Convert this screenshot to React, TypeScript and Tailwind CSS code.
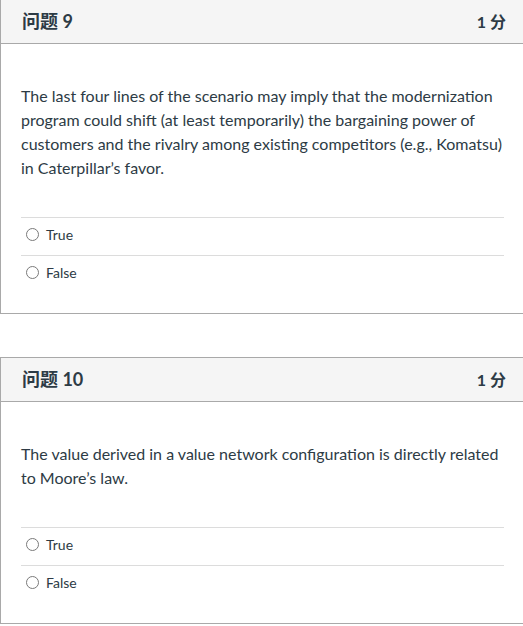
import React from 'react';

type Question = {
  num: number;
  text: string;
};

const questions: Question[] = [
  {
    num: 9,
    text: 'The last four lines of the scenario may imply that the modernization program could shift (at least temporarily) the bargaining power of customers and the rivalry among existing competitors (e.g., Komatsu) in Caterpillar’s favor.',
  },
  {
    num: 10,
    text: 'The value derived in a value network configuration is directly related to Moore’s law.',
  },
];

function Answer({ label }: { label: string }) {
  return (
    <div className="flex h-[38px] items-center border-t border-[#dcdcdc] pb-[4px] pl-[5px]">
      <span className="h-[13px] w-[13px] rounded-full border border-[#7a7a7a] bg-white" />
      <span className="ml-[7px] text-[14px] text-[#2d3b45]">{label}</span>
    </div>
  );
}

function QuestionCard({ q }: { q: Question }) {
  return (
    <div className="border border-[#a9a9a9] bg-white">
      <div className="flex h-[44px] items-center justify-between border-b border-[#a9a9a9] bg-[#f5f5f5] pl-[21px] pr-[18px]">
        <span className="text-[18px] font-bold text-[#2d3b45]">问题 {q.num}</span>
        <span className="text-[16px] font-bold text-[#2d3b45]">1 分</span>
      </div>
      <div className="px-[20px] pb-[20px] pt-[40px]">
        <p className="text-[16px] leading-[24px] text-[#2d3b45]">{q.text}</p>
        <div className="mt-[37px]">
          <Answer label="True" />
          <Answer label="False" />
        </div>
      </div>
    </div>
  );
}

export default function App() {
  return (
    <div className="h-[626px] w-[523px] overflow-hidden bg-white font-['Lato','Noto_Sans_CJK_SC',sans-serif]">
      <div className="-mt-[1px] flex w-[525px] flex-col gap-[43px]">
        {questions.map((q) => (
          <QuestionCard key={q.num} q={q} />
        ))}
      </div>
    </div>
  );
}
